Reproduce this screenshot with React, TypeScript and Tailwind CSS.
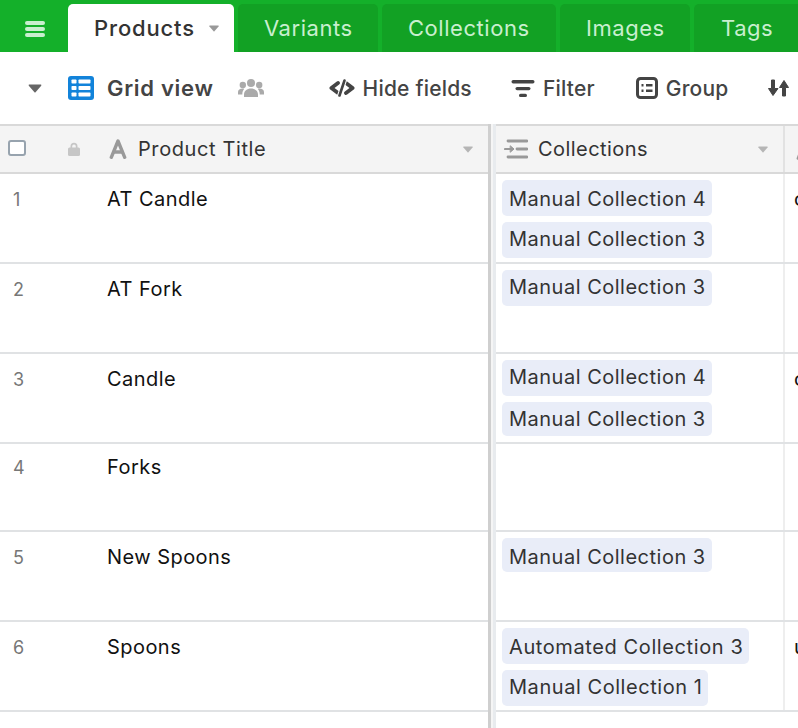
/**
 * Products table – green tab bar, toolbar, grid with linked collection pills
 */

const TABS = ['Variants', 'Collections', 'Images', 'Tags']

const ROWS = [
  {
    id: 1,
    title: 'AT Candle',
    pills: [
      { label: 'Manual Collection 4', cls: 'h-[36px] leading-[38px] tracking-[0.5px]' },
      { label: 'Manual Collection 3', cls: 'h-[36px] leading-[35px] tracking-[0.5px]' },
    ],
    next: 'c',
    height: 'h-[90px]',
    pad: 'pt-[12px]',
  },
  {
    id: 2,
    title: 'AT Fork',
    pills: [{ label: 'Manual Collection 3', cls: 'h-[36px] leading-[34px] tracking-[0.5px]' }],
    next: '',
    height: 'h-[90px]',
    pad: 'pt-[12px]',
  },
  {
    id: 3,
    title: 'Candle',
    pills: [
      { label: 'Manual Collection 4', cls: 'h-[36px] leading-[35px] tracking-[0.5px]' },
      { label: 'Manual Collection 3', cls: 'h-[34px] leading-[35px] tracking-[0.5px]' },
    ],
    next: 'c',
    height: 'h-[90px]',
    pad: 'pt-[12px]',
  },
  { id: 4, title: 'Forks', pills: [], next: '', height: 'h-[88px]', pad: 'pt-[10px]' },
  {
    id: 5,
    title: 'New Spoons',
    pills: [{ label: 'Manual Collection 3', cls: 'h-[34px] leading-[38px] tracking-[0.5px]' }],
    next: '',
    height: 'h-[90px]',
    pad: 'pt-[12px]',
  },
  {
    id: 6,
    title: 'Spoons',
    pills: [
      { label: 'Automated Collection 3', cls: 'h-[36px] leading-[38px] tracking-[0.6px]' },
      { label: 'Manual Collection 1', cls: 'h-[36px] leading-[34px] tracking-[0.55px]' },
    ],
    next: 'u',
    height: 'h-[90px]',
    pad: 'pt-[12px]',
  },
]

function Caret({ className }: { className: string }) {
  return (
    <svg className={className} viewBox="0 0 12 8" fill="currentColor">
      <path d="M1 .5h10c.5 0 .8.5.5 1L6.500 7.400c-.3.3-.7.3-1 0L.5 1.500C.2 1 .5.500 1 .5z" />
    </svg>
  )
}

function GridIcon() {
  return (
    <svg className="h-6 w-[26px]" viewBox="0 0 26 24">
      <rect width="26" height="24" rx="3" fill="#1283da" />
      <g fill="#fff">
        <rect x="3.500" y="3.500" width="5" height="4" rx=".8" />
        <rect x="10.500" y="3.500" width="12" height="4" rx=".8" />
        <rect x="3.500" y="10" width="5" height="4" rx=".8" />
        <rect x="10.500" y="10" width="12" height="4" rx=".8" />
        <rect x="3.500" y="16.500" width="5" height="4" rx=".8" />
        <rect x="10.500" y="16.500" width="12" height="4" rx=".8" />
      </g>
    </svg>
  )
}

function PeopleIcon() {
  return (
    <svg className="h-[18px] w-[26px] text-[#aaaaaa]" viewBox="0 0 26 18" fill="currentColor">
      <circle cx="13" cy="4" r="4" />
      <circle cx="4.800" cy="6" r="3.200" />
      <circle cx="21.200" cy="6" r="3.200" />
      <path d="M6 18v-2.500C6 12 9 9.500 13 9.500s7 2.500 7 6V18z" />
      <path d="M0 15.500V13c0-2 2-3.500 4.500-3.500.7 0 1.300.1 1.800.3C5 11.300 4.300 13 4.300 15.500z" />
      <path d="M26 15.500V13c0-2-2-3.500-4.500-3.500-.7 0-1.300.1-1.800.3 1.300 1.500 2 3.200 2 5.700z" />
    </svg>
  )
}

function HideIcon() {
  return (
    <svg className="h-[18px] w-[26px] text-[#444444]" viewBox="0 0 26 18" fill="none" strokeLinecap="round" strokeLinejoin="round">
      <path d="M9 4 2.400 9 9 14" stroke="currentColor" strokeWidth="3.800" />
      <path d="M17 4l6.600 5L17 14" stroke="currentColor" strokeWidth="3.800" />
      <path d="M15.500 1.500 10.500 16.500" stroke="#fff" strokeWidth="4.800" />
      <path d="M15.500 1.500 10.500 16.500" stroke="currentColor" strokeWidth="2.600" />
    </svg>
  )
}

function FilterIcon() {
  return (
    <svg className="h-[18px] w-[24px] text-[#444444]" viewBox="0 0 24 18" fill="currentColor">
      <rect x="0.500" y="1" width="23" height="3.400" rx="1.700" />
      <rect x="4.500" y="8" width="15" height="3.200" rx="1.600" />
      <rect x="8" y="14.800" width="8" height="3.200" rx="1.600" />
    </svg>
  )
}

function GroupIcon() {
  return (
    <svg className="h-[22px] w-[22px] text-[#444444]" viewBox="0 0 22 22" fill="none" stroke="currentColor">
      <rect x="1.500" y="1.500" width="19" height="19" rx="3" strokeWidth="3" />
      <path d="M5.500 8.200h2M10 8.200h6.500M5.500 13.800h2M10 13.800h6.500" strokeWidth="2.400" />
    </svg>
  )
}

function SortIcon() {
  return (
    <svg className="h-[18px] w-[21px] text-[#444444]" viewBox="0 0 21 18" fill="currentColor" stroke="currentColor" strokeWidth="1" strokeLinejoin="round">
      <path d="M3.500 1h3v8.500h3.500L5 16.500.5 9.500h3z" />
      <path d="M14.500 17h3V8.500h3L16 1.500l-4.500 7h3z" />
    </svg>
  )
}

function LinkFieldIcon() {
  return (
    <svg className="h-[20px] w-[24px] text-[#999999]" viewBox="0 0 24 20" fill="none" stroke="currentColor" strokeWidth="2.800" strokeLinecap="round">
      <path d="M4 2h19" />
      <path d="M13 10h10" />
      <path d="M4 18h19" />
      <path d="M1 10h8" strokeWidth="2.200" />
      <path d="M6.500 7 10 10l-3.500 3z" fill="currentColor" strokeWidth="1" strokeLinejoin="round" />
    </svg>
  )
}

function LockIcon() {
  return (
    <svg className="h-[14px] w-[12px] text-[#c6c6c6]" viewBox="0 0 12 14" fill="currentColor">
      <path d="M2.500 6V4.200a3.500 3.500 0 0 1 7 0V6h-1.700V4.200a1.800 1.800 0 0 0-3.600 0V6z" />
      <rect y="5.500" width="12" height="8.500" rx="1.500" />
    </svg>
  )
}

function TextFieldIcon() {
  return (
    <svg className="h-[20px] w-[18px] shrink-0 text-[#999999]" viewBox="0 0 18 20" fill="none" stroke="currentColor" strokeWidth="3.400" strokeLinecap="round" strokeLinejoin="round">
      <path d="M2.300 18.300 9 2l6.700 16.300" />
      <path d="M5 13h8" />
    </svg>
  )
}

function ToolbarItem({ icon, label, className }: { icon: React.ReactNode; label: string; className: string }) {
  return (
    <div className={`flex shrink-0 items-center gap-[8px] ${className}`}>
      {icon}
      <span className="mt-[2px] text-[21px] font-medium tracking-[0.2px] text-[#444444]">{label}</span>
    </div>
  )
}

export default function App() {
  return (
    <div className="flex h-[728px] w-[798px] flex-col overflow-hidden bg-white font-['Inter',sans-serif]">
      {/* tab bar */}
      <div className="flex h-[52px] shrink-0 items-end bg-[#14b02a]">
        <div className="flex h-full w-[68px] shrink-0 items-center justify-center pl-[2px] pt-[6px]">
          <div className="flex w-[20px] flex-col gap-[2px]">
            <div className="h-[4px] rounded-full bg-[#c9efcf]" />
            <div className="h-[4px] rounded-full bg-[#c9efcf]" />
            <div className="h-[4px] rounded-full bg-[#c9efcf]" />
          </div>
        </div>
        <div className="flex h-[48px] w-[166px] shrink-0 items-center rounded-t-[5px] bg-white pl-[26px]">
          <span className="text-[22px] font-medium tracking-[0.85px] text-[#333333]">Products</span>
          <Caret className="ml-[14px] h-[7px] w-[10px] text-[#999999]" />
        </div>
        <div className="ml-[4px] flex h-[48px] gap-[4px]">
          {TABS.map((t, i) => (
            <div
              key={t}
              className={`flex h-full items-center rounded-t-[5px] bg-[#12a124] text-[22px] tracking-[0.55px] text-[#c9efcf] ${
                i === 0 ? 'w-[140px] pl-[26px]' : i === 1 ? 'w-[174px] pl-[26px]' : i === 2 ? 'w-[130px] pl-[26px]' : 'w-[120px] pl-[27px]'
              }`}
            >
              {t}
            </div>
          ))}
        </div>
      </div>

      {/* toolbar */}
      <div className="flex h-[72px] shrink-0 items-center">
        <Caret className="ml-[28px] h-[9px] w-[14px] text-[#666666]" />
        <div className="ml-[26px]">
          <GridIcon />
        </div>
        <span className="ml-[13px] text-[22px] font-semibold tracking-[0.7px] text-[#444444]">Grid view</span>
        <div className="ml-[24px]">
          <PeopleIcon />
        </div>
        <ToolbarItem className="ml-[65px]" icon={<HideIcon />} label="Hide fields" />
        <ToolbarItem className="ml-[39px]" icon={<FilterIcon />} label="Filter" />
        <ToolbarItem className="ml-[41px]" icon={<GroupIcon />} label="Group" />
        <div className="ml-[40px] shrink-0">
          <SortIcon />
        </div>
      </div>

      {/* grid */}
      <div className="relative flex min-h-0 flex-1 flex-col">
        <div className="flex h-[50px] shrink-0 border-y-2 border-[#d9d9d9] bg-[#f4f4f4]">
          <div className="flex w-[489px] shrink-0 items-center">
            <div className="mb-[2px] ml-[8px] h-[16px] w-[18px] rounded-[3px] border-2 border-[#97a3ae] bg-white" />
            <div className="ml-[42px]">
              <LockIcon />
            </div>
            <div className="ml-[29px]">
              <TextFieldIcon />
            </div>
            <span className="ml-[11px] text-[20px] tracking-[0.6px] text-[#333333]">Product Title</span>
            <Caret className="ml-auto mr-[16px] h-[7px] w-[10px] text-[#b5b5b5]" />
          </div>
          <div className="w-[6px] shrink-0" />
          <div className="flex w-[290px] shrink-0 items-center border-r-2 border-[#e2e2e2]">
            <div className="ml-[9px]">
              <LinkFieldIcon />
            </div>
            <span className="ml-[10px] text-[20px] tracking-[0.45px] text-[#333333]">Collections</span>
            <Caret className="ml-auto mr-[15px] h-[7px] w-[10px] text-[#b5b5b5]" />
          </div>
          <div className="ml-[11px]">
            <div className="mt-[14px]">
              <TextFieldIcon />
            </div>
          </div>
        </div>

        {ROWS.map((r) => (
          <div key={r.id} className={`flex shrink-0 border-b-2 border-[#e0e2e4] ${r.height}`}>
            <div className={`flex w-[489px] shrink-0 ${r.pad}`}>
              <span className="ml-[13px] w-[94px] text-[18px] leading-[28px] text-[#777777]">{r.id}</span>
              <span className="text-[20px] leading-[26px] tracking-[0.45px] text-[#111111]">{r.title}</span>
            </div>
            <div className="w-[6px] shrink-0" />
            <div className="flex w-[290px] shrink-0 flex-col items-start gap-[6px] border-r-2 border-[#eeeeee] pl-[7px] pt-[6px]">
              {r.pills.map((p) => (
                <span key={p.label} className={`whitespace-nowrap rounded-[5px] bg-[#e9edf8] pl-[7px] pr-[6px] text-[20px] text-[#333333] ${p.cls}`}>
                  {p.label}
                </span>
              ))}
            </div>
            <div className="w-[13px] shrink-0 pl-[9px] pt-[11px] text-[20px] leading-[28px] text-[#111111]">{r.next}</div>
          </div>
        ))}

        {/* frozen column divider runs over the row lines */}
        <div className="absolute bottom-0 left-[488px] top-0 w-[3px] bg-[#cfcfcf]" />
        <div className="absolute bottom-0 left-[491px] top-0 w-[2px] bg-[#f5f5f5]" />
        <div className="absolute bottom-0 left-[493px] top-0 w-[3px] bg-[#e8ebee]" />
      </div>
    </div>
  )
}
